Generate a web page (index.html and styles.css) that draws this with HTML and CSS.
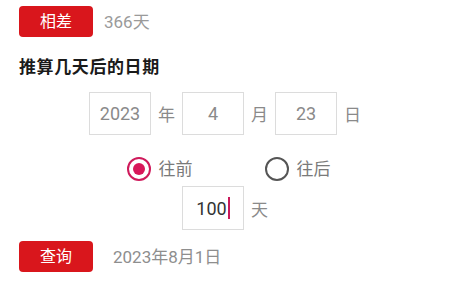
FILE: index.html
```html
<!DOCTYPE html>
<html lang="zh">
<head>
<meta charset="utf-8">
<link rel="stylesheet" href="styles.css">
</head>
<body>
<div class="page">
  <div class="action-row first">
    <div class="btn">相差</div>
    <div class="result">366天</div>
  </div>
  <div class="heading">推算几天后的日期</div>
  <div class="date-row">
    <div class="box">2023</div><span class="unit">年</span>
    <div class="box">4</div><span class="unit">月</span>
    <div class="box">23</div><span class="unit">日</span>
  </div>
  <div class="radio-row">
    <div class="option"><span class="radio checked"></span><span class="opt-label">往前</span></div>
    <div class="option"><span class="radio"></span><span class="opt-label">往后</span></div>
  </div>
  <div class="days-row">
    <div class="box active">100<span class="caret"></span></div><span class="unit">天</span>
  </div>
  <div class="action-row last">
    <div class="btn">查询</div>
    <div class="result">2023年8月1日</div>
  </div>
</div>
</body>
</html>
```
FILE: styles.css
```css
html, body {
  margin: 0;
  padding: 0;
  background: #ffffff;
}
body {
  font-family: Roboto, "Noto Sans CJK SC", sans-serif;
  width: 450px;
  height: 300px;
  overflow: hidden;
}
.page {
  padding: 6px 0 0 19px;
  box-sizing: border-box;
  width: 450px;
}
.action-row {
  display: flex;
  align-items: center;
  gap: 19px;
}
.action-row.last {
  margin-top: 11px;
  gap: 20px;
}
.btn {
  width: 74px;
  height: 31px;
  background: #d9161c;
  color: #ffffff;
  border-radius: 4px;
  font-size: 16px;
  line-height: 31px;
  text-align: center;
}
.result {
  color: #8e8e8e;
  font-size: 17px;
  line-height: 20px;
}
.action-row.first .result {
  margin-left: -8px;
  color: #9a9a9a;
}
.heading {
  margin-top: 20px;
  font-weight: bold;
  font-size: 17px;
  line-height: 20px;
  letter-spacing: 0.6px;
  color: #1a1a1a;
}
.date-row, .days-row {
  display: flex;
  justify-content: center;
  align-items: center;
  gap: 7px;
  margin-left: -19px;
}
.date-row {
  margin-top: 15px;
}
.days-row {
  margin-top: 5px;
}
.box {
  width: 62px;
  height: 43px;
  box-sizing: border-box;
  border: 1px solid #dcdcdc;
  display: flex;
  justify-content: center;
  align-items: center;
  font-size: 18px;
  color: #8a8a8a;
}
.box.active {
  height: 44px;
  color: #333333;
}
.caret {
  display: inline-block;
  width: 2px;
  height: 22px;
  background: #c8195a;
  margin-left: 1px;
}
.unit {
  font-size: 17px;
  color: #8a8a8a;
  width: 17px;
}
.radio-row {
  display: flex;
  justify-content: center;
  gap: 72px;
  margin: 22px 0 0 -12px;
}
.option {
  display: flex;
  align-items: center;
  gap: 8px;
}
.radio {
  width: 24px;
  height: 24px;
  box-sizing: border-box;
  border-radius: 50%;
  border: 2.5px solid #555555;
  display: flex;
  justify-content: center;
  align-items: center;
}
.radio.checked {
  border-color: #cf1a5b;
}
.radio.checked::after {
  content: "";
  width: 12px;
  height: 12px;
  border-radius: 50%;
  background: #d8175a;
}
.opt-label {
  font-size: 17px;
  color: #7a7a7a;
  line-height: 24px;
}
```
